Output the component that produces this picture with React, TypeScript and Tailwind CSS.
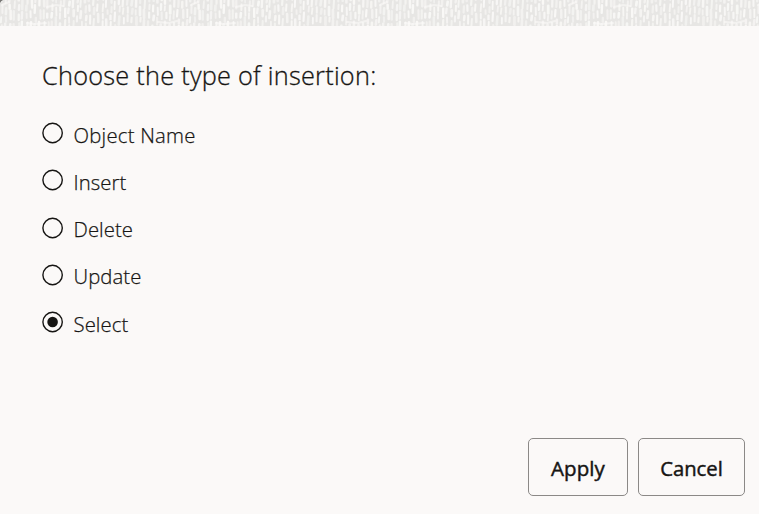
import React from "react";

const options = ["Object Name", "Insert", "Delete", "Update", "Select"];

const TILE = 189;

function makeStrokes() {
  let seed = 97;
  const rand = () => {
    seed = (seed * 16807) % 2147483647;
    return seed / 2147483647;
  };
  const strokes: { d: string; w: number; o: number }[] = [];
  for (let x = 1.5; x < TILE - 1; x += 4.2) {
    let y = -6 + rand() * 8;
    while (y < 26) {
      const len = 3.5 + rand() * 5;
      const cx = x + rand() * 1.8 - 0.6;
      const tilt = rand() * 0.8 - 0.6;
      strokes.push({
        d: `M${cx.toFixed(1)} ${y.toFixed(1)}l${tilt.toFixed(1)} ${len.toFixed(1)}`,
        w: 1.8 + rand() * 0.9,
        o: 0.5 + rand() * 0.4,
      });
      y += len + 2 + rand() * 3.5;
    }
  }
  return strokes;
}

const strokes = makeStrokes();

function TextureStrip() {
  return (
    <svg className="block h-[26px] w-full shrink-0 bg-[#e7e6e4]" aria-hidden="true">
      <defs>
        <filter id="soft" x="0" y="0" width="100%" height="100%">
          <feGaussianBlur stdDeviation="0.6" />
        </filter>
        <pattern id="weave" width={TILE} height="26" patternUnits="userSpaceOnUse">
          {strokes.map((s, i) => (
            <path key={i} d={s.d} stroke="#fbfaf8" strokeWidth={s.w} strokeOpacity={s.o} strokeLinecap="round" />
          ))}
          <g stroke="#fbfaf8" strokeLinecap="round" strokeWidth="2" strokeOpacity="0.6" fill="none">
            <path d="M47 7l9-2 7 1M27 23l8 1 11-1M158 22l11 1 8-2M2 5l7-3" />
          </g>
        </pattern>
      </defs>
      <rect width="100%" height="26" fill="url(#weave)" filter="url(#soft)" />
      <path d="M0 0h3Q1 1 0 3z" fill="#777674" />
    </svg>
  );
}

function Radio({ checked }: { checked: boolean }) {
  return (
    <svg viewBox="0 0 22 22" className="-mt-[3px] size-[22px] shrink-0" fill="none" aria-hidden="true">
      <circle cx="10.6" cy="11" r="9.7" stroke="#161513" strokeWidth="1.4" />
      {checked && <circle cx="10.6" cy="11" r="5.3" fill="#161513" />}
    </svg>
  );
}

export default function App() {
  return (
    <main className="flex h-[514px] w-[759px] flex-col overflow-hidden bg-[#fbf9f8] font-['Open_Sans','Noto_Sans',sans-serif] text-[#161513]">
      <TextureStrip />
      <section className="pr-[41px] pl-[42px] pt-[32px]">
        <h1 className="text-[25.3px] leading-[34px] font-light tracking-[0.25px] whitespace-nowrap [-webkit-text-stroke:0.3px_#161513]">
          Choose the type of insertion:
        </h1>
        <div className="mt-[19px] flex flex-col" role="radiogroup">
          {options.map((label) => (
            <div key={label} role="radio" aria-checked={label === "Select"} className="flex h-[47.25px] items-center gap-[9.5px]">
              <Radio checked={label === "Select"} />
              <span
                className={`text-[20.3px] leading-[28px] font-light whitespace-nowrap [-webkit-text-stroke:0.25px_#161513] ${
                  label === "Object Name" ? "tracking-[0.25px]" : "tracking-[0.08px]"
                }`}
              >
                {label}
              </span>
            </div>
          ))}
        </div>
      </section>
      <footer className="mt-auto mb-[18px] flex justify-end gap-[10px] pr-[14px]">
        <button className="h-[58px] w-[100px] rounded-[5px] border border-[#8b8987] pt-[3px] text-[20.5px] tracking-[0.1px] [-webkit-text-stroke:0.45px_#161513]">Apply</button>
        <button className="h-[58px] w-[107px] rounded-[5px] border border-[#8b8987] pt-[3px] text-[20.3px] [-webkit-text-stroke:0.45px_#161513]">Cancel</button>
      </footer>
    </main>
  );
}
